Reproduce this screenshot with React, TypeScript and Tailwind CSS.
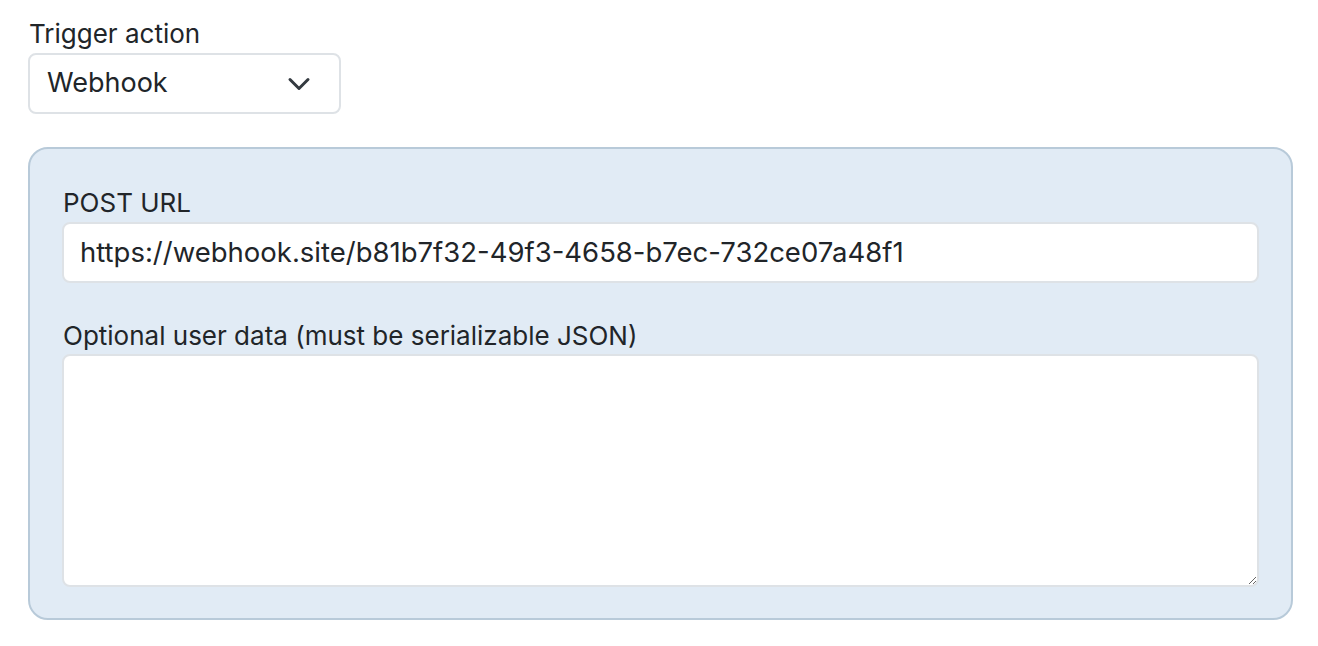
import React from "react";

const font = { fontFamily: "Inter, 'Noto Sans', sans-serif" };

const App = () => {
  return (
    <div
      style={font}
      className="min-h-[646px] w-[1318px] bg-white pl-[28px] pr-[25px] pt-[18px] text-[#212529]"
    >
      {/* Trigger action select */}
      <label className="block pl-px text-[26px] leading-[32px]">Trigger action</label>
      <div className="mt-[3px] flex h-[61px] w-[313px] items-center justify-between rounded-[8px] border-2 border-[#dee2e6] bg-white pl-[17px] pr-[28px]">
        <span className="text-[27px]">Webhook</span>
        <svg width="24" height="24" viewBox="0 0 16 16" fill="none">
          <path
            d="M2 5l6 6 6-6"
            stroke="#343a40"
            strokeWidth="2"
            strokeLinecap="round"
            strokeLinejoin="round"
          />
        </svg>
      </div>

      {/* Webhook settings panel */}
      <div className="mt-[33px] flex flex-col rounded-[20px] border-2 border-[#b8cad9] bg-[#e1ebf5] px-[32px] pb-[31px] pt-[38px]">
        <label className="block pl-px text-[26px] leading-[32px]">POST URL</label>
        <div className="mt-[3px] flex h-[61px] items-center rounded-[8px] border-2 border-[#dee2e6] bg-white pl-[16px]">
          <span className="text-[27.5px]">https://webhook.site/b81b7f32-49f3-4658-b7ec-732ce07a48f1</span>
        </div>

        <label className="mt-[37px] block pl-px text-[26px] leading-[32px]">
          Optional user data (must be serializable JSON)
        </label>
        <textarea
          style={font}
          className="mt-[2px] h-[233px] rounded-[8px] border-2 border-[#dee2e6] bg-white px-[16px] py-[12px] text-[27.5px] outline-none"
        />
      </div>
    </div>
  );
};

export default App;
